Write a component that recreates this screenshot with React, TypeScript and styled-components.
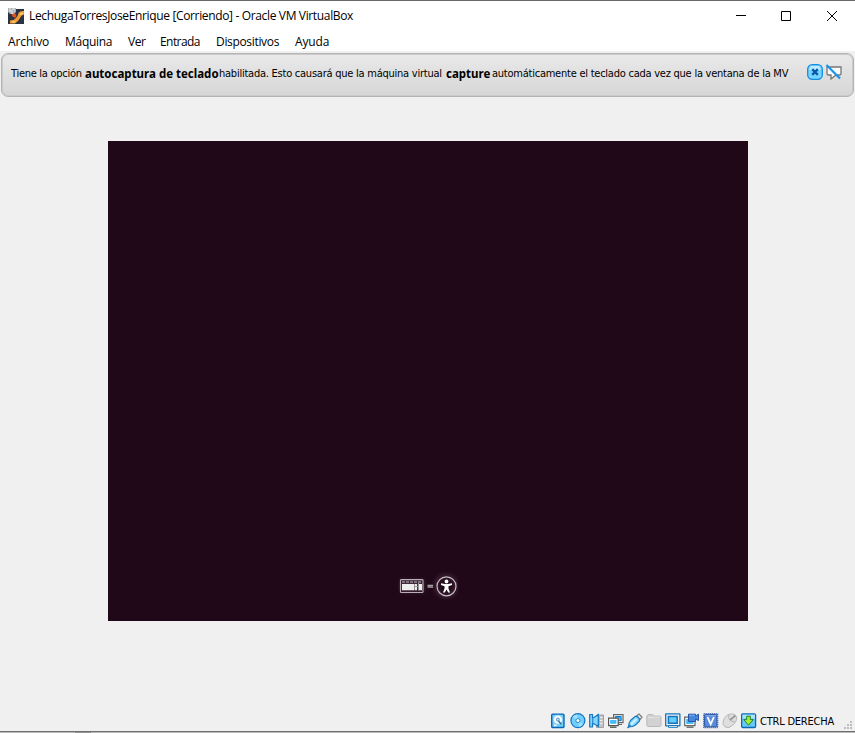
import React from "react";
import styled, { createGlobalStyle } from "styled-components";

const GlobalStyle = createGlobalStyle`
  * { box-sizing: border-box; }
  html, body { margin: 0; padding: 0; overflow: hidden; }
`;

const Window = styled.div`
  display: flex;
  flex-direction: column;
  width: 855px;
  height: 733px;
  background: #f0f0f0;
  border-top: 1px solid #69696b;
  color: #000;
  font-family: "Open Sans", "Noto Sans", sans-serif;
  font-size: 12px;
  white-space: pre;
`;

const TitleBar = styled.header`
  display: flex;
  align-items: center;
  height: 30px;
  padding-left: 8px;
  background: #fff;
`;

const Run = styled.span<{ $spacing?: number; $width?: number }>`
  display: block;
  flex: none;
  letter-spacing: ${(p) => p.$spacing ?? 0}px;
  width: ${(p) => (p.$width ? `${p.$width}px` : "auto")};
`;

const Title = styled(Run)`
  margin-left: 5px;
  padding-bottom: 1px;
`;

const WindowControls = styled.div`
  display: flex;
  margin-left: auto;
`;

const ControlButton = styled.button`
  display: flex;
  align-items: center;
  justify-content: center;
  width: 46px;
  height: 30px;
  padding: 0;
  border: 0;
  background: none;
`;

const MenuBar = styled.nav`
  display: flex;
  height: 20px;
  padding-left: 8px;
  background: #fff;
  line-height: 22px;
`;

const MessagePanel = styled.section`
  display: flex;
  flex: none;
  height: 44px;
  margin: 2px 1px 0;
  padding-left: 9px;
  border: 1px solid #b4b4b4;
  box-shadow: inset 0 0 0 1px #cbcbcb;
  border-radius: 7px;
  background: linear-gradient(#e9e9e9, #d6d6d6);
  font-family: "DejaVu Sans Condensed", "DejaVu Sans", sans-serif;
  font-stretch: condensed;
  font-size: 11px;
  line-height: 40px;
`;

const Bold = styled(Run)`
  font-family: "Noto Sans", "Open Sans", sans-serif;
  font-stretch: normal;
  font-size: 11.5px;
  font-weight: 700;
`;

const PanelActions = styled.div`
  display: flex;
  gap: 3px;
  margin: 10px 11px 0 auto;
`;

const Viewport = styled.main`
  display: flex;
  flex: 1;
  justify-content: center;
  padding-top: 44px;
  padding-left: 1px;
`;

const GuestScreen = styled.div`
  display: flex;
  align-items: flex-end;
  justify-content: center;
  width: 640px;
  height: 480px;
  padding-bottom: 21px;
  background: #210818;
`;

const StatusBar = styled.footer`
  display: flex;
  flex: none;
  align-items: flex-start;
  justify-content: flex-end;
  height: 19px;
  padding-top: 1px;
  gap: 3px;
  font-family: "DejaVu Sans Condensed", "DejaVu Sans", sans-serif;
  font-stretch: condensed;
  font-size: 11px;
  line-height: 17px;
`;

const Grip = styled.svg`
  margin: 8px 2px 0 4px;
`;

const Footing = styled.div`
  flex: none;
  height: 2px;
  border-top: 1px solid #707070;
  background: linear-gradient(90deg, #b8b8b8 75px, #929292 75px 91px, #b8b8b8 91px);
`;

const Icon = ({ children }: { children: React.ReactNode }) => (
  <svg width="16" height="16" viewBox="0 0 16 16" fill="none">{children}</svg>
);

const AppIcon = () => (
  <Icon>
    <path d="M0 1H16V16H0Z" fill="#293344" />
    <path d="M2 12.5Q6 12.5 8 10Q10 8 10.5 5Q12 2.5 16 3V6.5Q13 7 12 10Q10 14 7 15.5H2Z" fill="#f39a35" />
    <path d="M3 13.5L6 13L8 13.5L6 15M11.5 7L12.5 5L15 4.5V6L12.5 7Z" fill="#ffd070" />
    <path d="M3.5 6L7 5L8.5 8L7 10L4.5 8.5Z" fill="#e0531e" />
    <path d="M0 0H8V4L6 6H2L0 4Z" fill="#a9aeb6" />
    <path d="M1 1H3M4 1H7M1 3H5M6 3H7M3 5H5" stroke="#f4f4f4" />
  </Icon>
);

const DiscardIcon = () => (
  <Icon>
    <rect x=".7" y=".7" width="14.6" height="14.6" rx="4.5" fill="#77d6ff" stroke="#168ae0" strokeWidth="1.3" />
    <path d="M4 2H12L14 6H2Z" fill="#b9edff" />
    <path d="M5.2 5.2L10.8 10.8M10.8 5.2L5.2 10.8" stroke="#0c59a9" strokeWidth="2.4" />
  </Icon>
);

const MuteMessageIcon = () => (
  <Icon>
    <path d="M1 3H15V10L14 11H10L5 15V11H2L1 10Z" fill="#fafafa" stroke="#777" strokeWidth="1.3" />
    <path d="M.5 1L14 14.5" stroke="#1494ef" strokeWidth="2.2" />
  </Icon>
);

const DiskIcon = () => (
  <Icon>
    <rect x=".7" y="1.1" width="12.3" height="13.4" rx="1" fill="#72cdf8" stroke="#0867b8" strokeWidth="1.4" />
    <circle cx="6.9" cy="6.6" r="4.4" fill="#f5fcff" stroke="#9bd8f5" strokeWidth=".7" />
    <circle cx="6.9" cy="6.6" r="1.5" fill="#bfe6f8" stroke="#3f7fa8" strokeWidth=".8" />
    <path d="M7.5 8L10.3 11.2" stroke="#356a8d" strokeWidth="1.4" />
    <path d="M3 12.4H5.5" stroke="#fff" strokeWidth="1.5" />
  </Icon>
);

const DiscIcon = () => (
  <Icon>
    <circle cx="7.9" cy="7.6" r="7" fill="#70cffd" stroke="#1774bd" strokeWidth="1.2" />
    <path d="M8 7.6L2.5 4A7 7 0 0 1 7 1.5ZM8 7.6L13 11A7 7 0 0 1 9 13.8Z" fill="#a0e1ff" />
    <circle cx="7.9" cy="7.6" r="2" fill="#fff" stroke="#2789c9" />
  </Icon>
);

const AudioIcon = () => (
  <Icon>
    <path d="M10 2H14.5V14.5H7.5V12.5H10Z" fill="#c4c4c4" stroke="#a0a0a0" />
    <path d="M11 4.5H13.5M11 7.5H13.5M11 10.5H13.5" stroke="#eee" />
    <path d="M.7 1.5H3.5V4.5H5L9.3 1.5V13.5L5 10.8H3.5V14H.7Z" fill="#84d7fc" stroke="#1376c2" strokeWidth="1.2" />
    <path d="M3.8 4.5V11" stroke="#1376c2" />
  </Icon>
);

const NetworkIcon = () => (
  <Icon>
    <path d="M5.6 1.6H15V9.6H5.6Z" fill="#fff" stroke="#656565" strokeWidth="1.2" />
    <path d="M7.5 3.5H13.2V7.7H7.5Z" fill="#42bafa" stroke="#087bcb" />
    <path d="M9 11H14V12H9Z" fill="#666" />
    <path d="M.6 5.2H10.2V12.6H.6Z" fill="#fff" stroke="#555" strokeWidth="1.2" />
    <path d="M2.2 7H8.4V10.8H2.2Z" fill="#42bafa" />
    <path d="M2 14.2H8.5" stroke="#555" strokeWidth="1.4" />
  </Icon>
);

const UsbIcon = () => (
  <Icon>
    <path d="M9.5 3L12 1L15 4L13 6.5Z" fill="#eee" stroke="#777" strokeWidth="1.2" />
    <path d="M8 3.5Q12.5 3 12.5 8L8.5 12Q6 14 1.5 14Q1.5 10 3.5 7.5Z" fill="#83d9ff" stroke="#1b76bd" strokeWidth="1.2" />
    <path d="M4 11.5L9.5 6" stroke="#c9f1ff" strokeWidth="2.2" />
    <path d="M.5 15L3.5 12" stroke="#1b76bd" strokeWidth="1.3" />
  </Icon>
);

const FolderIcon = () => (
  <Icon>
    <path d="M.8 12.5V3L2 1.5H6.5L7.5 3H14L15 4V12.5L14 13.5H2Z" fill="#d2d2d2" stroke="#bababa" />
    <path d="M2 4.5H7.5L9 4H14" stroke="#e5e5e5" />
  </Icon>
);

const DisplayIcon = () => (
  <Icon>
    <rect x=".7" y=".9" width="14.2" height="11.9" rx=".3" fill="#f4f4f4" stroke="#1475bd" strokeWidth="1.3" />
    <path d="M3.4 3.4H12.2V10.3H3.4Z" fill="#63ccfb" stroke="#1475bd" strokeWidth="1.5" />
    <path d="M3.5 12.5H12.5V14.3H3.5Z" fill="#f5f5f5" stroke="#1475bd" />
  </Icon>
);

const RecordingIcon = () => (
  <Icon>
    <path d="M.7 4.2H11V12.6H.7Z" fill="#fff" stroke="#676767" strokeWidth="1.2" />
    <path d="M2.2 6H9.5V11H2.2Z" fill="#42bafa" />
    <path d="M4.5 1.2H11.5V3L14.5 1.2V7.5L11.5 6V8.5H4.5Z" fill="#4687dc" stroke="#2455a8" />
    <path d="M5 2.3H11" stroke="#7aafeb" />
    <path d="M2.5 14.2H9.5" stroke="#666" strokeWidth="1.4" />
  </Icon>
);

const ProcessorIcon = () => (
  <Icon>
    <rect x=".7" y=".7" width="14" height="14" stroke="#294f9f" strokeWidth="1.3" strokeDasharray="1 1" />
    <rect x="1.6" y="1.6" width="12.2" height="12.2" rx=".5" fill="#5c8bd8" stroke="#2454aa" />
    <path d="M2.5 2.7H13" stroke="#8eb2ec" />
    <path d="M4.5 4L7.7 11.2L10.9 4" stroke="#fff" strokeWidth="1.8" />
  </Icon>
);

const MouseIcon = () => (
  <Icon>
    <path d="M1.3 8Q3 2 8 1Q14 0 14.7 5Q14.8 9 11 12Q7 16 3 14Q0 12 1.3 8Z" fill="#dedede" stroke="#bababa" />
    <path d="M7 1.5Q6 5 7.5 6.5Q9 8.5 13 9" stroke="#b2b2b2" />
    <path d="M8 7L13.5 2.5" stroke="#999" strokeWidth="1.8" />
  </Icon>
);

const HostKeyIcon = () => (
  <Icon>
    <rect x=".6" y=".9" width="14" height="13.6" rx="1.3" fill="#68c9f4" stroke="#0869b7" strokeWidth="1.3" />
    <path d="M1.5 1.7H14V5.5H1.5Z" fill="#a9e0fa" />
    <path d="M5.7 3.2H9.3V6.6H12.3L7.5 12.2L2.8 6.6H5.7Z" fill="#a8ee33" stroke="#248331" />
  </Icon>
);

const AccessibilityHint = () => (
  <svg width="60" height="28" viewBox="0 0 60 28" fill="none">
    <defs>
      <filter id="glow" x="-20%" y="-30%" width="140%" height="160%">
        <feGaussianBlur stdDeviation="2" />
      </filter>
    </defs>
    <g filter="url(#glow)" opacity=".24">
      <rect x="2" y="8" width="24" height="12" fill="#b29dac" />
      <circle cx="48" cy="14" r="10" stroke="#c2a6ba" strokeWidth="3" />
    </g>
    <rect x="2.5" y="7.6" width="22.5" height="12.9" rx=".8" stroke="#b9afb7" strokeWidth="1.1" />
    <path d="M4 10H24" stroke="#c5bec4" strokeDasharray="3 1" />
    <path d="M4 12H16.5V18.3H4ZM17 12H19V18.3H17ZM20 12H24V18.3H20Z" fill="#eee" />
    <path d="M17 14.5H20M20.5 11V18" stroke="#9e929b" />
    <path d="M29.5 13.3H35M29.5 15H35" stroke="#aaa0a8" strokeWidth="1.3" />
    <circle cx="48.5" cy="14.3" r="9.5" stroke="#c8bdc5" strokeWidth="1.2" />
    <circle cx="48.5" cy="9.5" r="1.9" fill="#fff" />
    <path d="M43 11.2L47 12H50L54 11.2V13L50.5 14.3V16.5L52 20.5H50.2L48.5 17.5L46.8 20.5H45L46.5 16.5V14.3L43 13Z" fill="#fff" />
  </svg>
);

const menus = [
  { label: "Archivo", width: 57, spacing: -0.1 },
  { label: "Máquina", width: 63, spacing: -0.28 },
  { label: "Ver", width: 32, spacing: -0.5 },
  { label: "Entrada", width: 56, spacing: -0.57 },
  { label: "Dispositivos", width: 79, spacing: -0.33 },
  { label: "Ayuda", width: 50, spacing: -0.15 },
];

export default function App() {
  return (
    <>
      <GlobalStyle />
      <Window>
        <TitleBar>
          <AppIcon />
          <Title $spacing={-0.35}>LechugaTorresJoseEnrique [Corriendo] - Oracle VM VirtualBox</Title>
          <WindowControls>
            <ControlButton aria-label="Minimizar">
              <svg width="11" height="10"><path d="M1 4.5H11" stroke="#000" /></svg>
            </ControlButton>
            <ControlButton aria-label="Maximizar">
              <svg width="10" height="10"><path d="M.5 .5H9.5V9.5H.5Z" fill="none" stroke="#000" /></svg>
            </ControlButton>
            <ControlButton aria-label="Cerrar">
              <svg width="10" height="10"><path d="M0 0L10 10M10 0L0 10" stroke="#000" /></svg>
            </ControlButton>
          </WindowControls>
        </TitleBar>
        <MenuBar>
          {menus.map((m) => <Run key={m.label} $width={m.width} $spacing={m.spacing}>{m.label}</Run>)}
        </MenuBar>
        <MessagePanel>
          <Run $width={74} $spacing={-0.28}>Tiene la opción</Run>
          <Bold $width={134}>autocaptura de teclado</Bold>
          <Run $width={227} $spacing={-0.24}>habilitada. Esto causará que la máquina virtual</Run>
          <Bold $width={46}>capture</Bold>
          <Run $width={300} $spacing={-0.24}>automáticamente el teclado cada vez que la ventana de la MV</Run>
          <PanelActions><DiscardIcon /><MuteMessageIcon /></PanelActions>
        </MessagePanel>
        <Viewport><GuestScreen><AccessibilityHint /></GuestScreen></Viewport>
        <StatusBar>
          <DiskIcon /><DiscIcon /><AudioIcon /><NetworkIcon /><UsbIcon /><FolderIcon />
          <DisplayIcon /><RecordingIcon /><ProcessorIcon /><MouseIcon /><HostKeyIcon />
          <Run $width={77} $spacing={-0.22}>CTRL DERECHA</Run>
          <Grip width="9" height="9">
            <path d="M6 0H8V2H6ZM3 3H5V5H3ZM6 3H8V5H6ZM0 6H2V8H0ZM3 6H5V8H3ZM6 6H8V8H6Z" fill="#bdbdbd" />
          </Grip>
        </StatusBar>
        <Footing />
      </Window>
    </>
  );
}
